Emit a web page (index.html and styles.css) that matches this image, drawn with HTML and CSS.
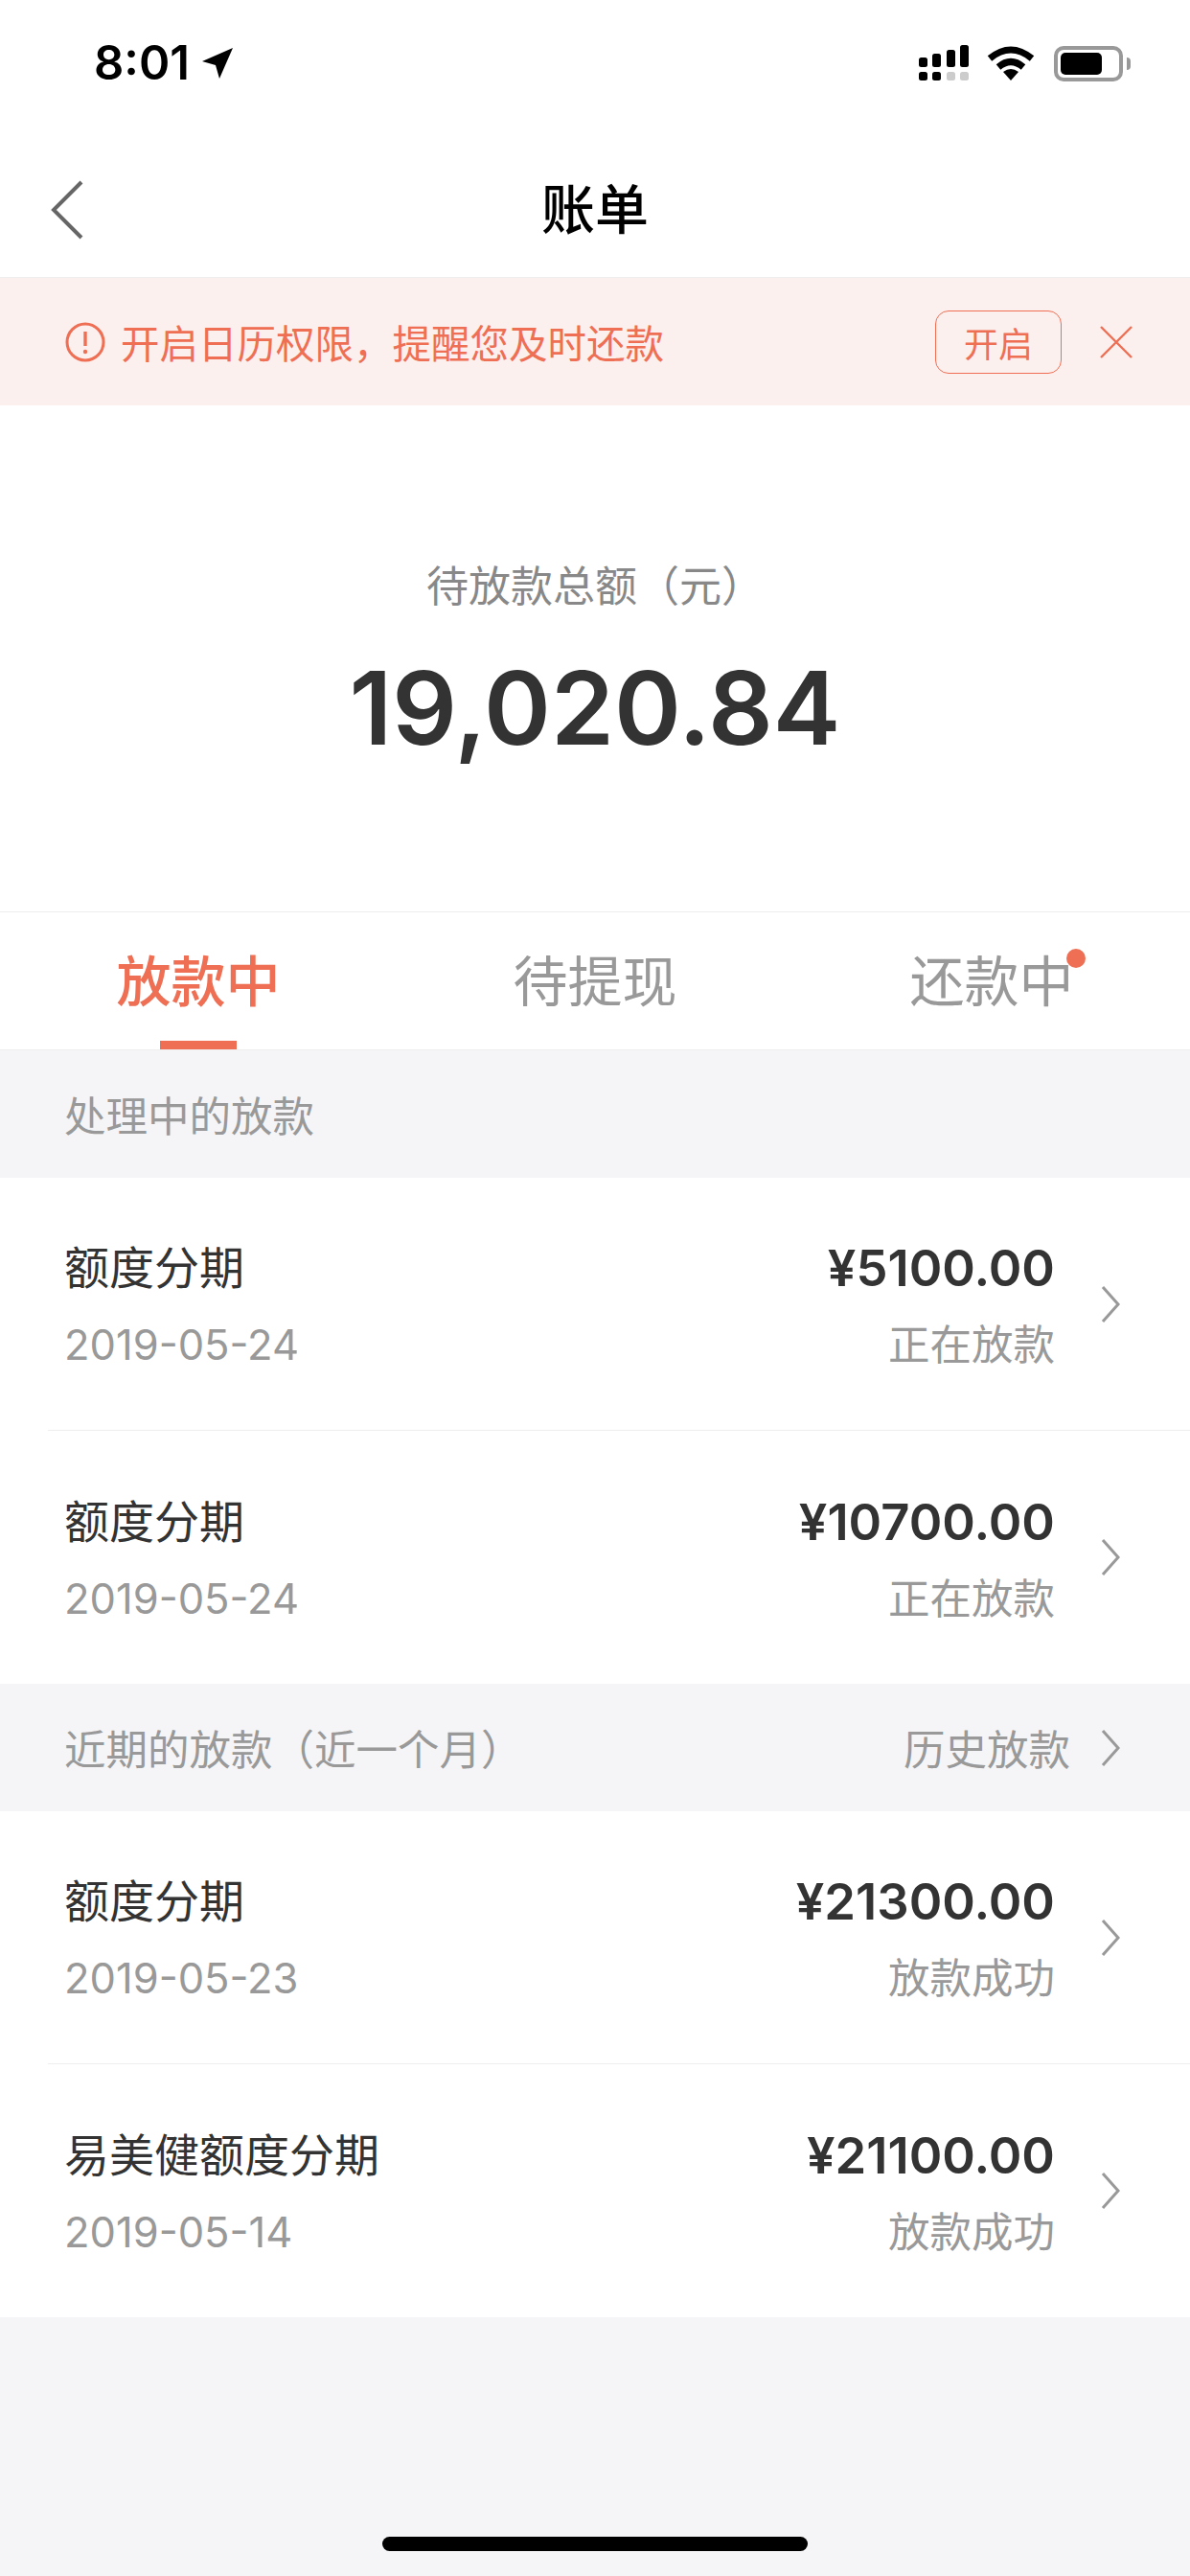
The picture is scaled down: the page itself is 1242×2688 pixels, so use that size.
FILE: index.html
```html
<!DOCTYPE html>
<html lang="zh-CN">

<head>
    <meta charset="UTF-8">
    <meta name="viewport" content="width=device-width, initial-scale=1.0">
    <title>账单</title>
    <link rel="stylesheet" href="styles.css">
</head>

<body>
    <div class="statusbar">
        <div class="status-time">
            <span>8:01</span>
            <svg class="status-arrow" width="34" height="34" viewBox="0 0 34 34">
                <path d="M33 1 L1 15 L15 19 L19 33 Z" fill="#000" />
            </svg>
        </div>
        <div class="status-icons">
            <svg width="52" height="38" viewBox="0 -1 52 38">
                <rect x="0" y="12" width="9" height="10" rx="2.5" />
                <rect x="14" y="8" width="9" height="14" rx="2.5" />
                <rect x="29" y="4" width="9" height="18" rx="2.5" />
                <rect x="43" y="-1" width="9" height="23" rx="2.5" />
                <rect x="0" y="27" width="9" height="9" rx="2.5" />
                <rect x="14" y="27" width="9" height="9" rx="2.5" />
                <rect x="29" y="27" width="9" height="9" rx="2.5" fill="#ccc" />
                <rect x="43" y="27" width="9" height="9" rx="2.5" fill="#ccc" />
            </svg>
            <svg width="50" height="36" viewBox="0 0 50 36">
                <path d="M3 13 Q25 -5 47 13" fill="none" stroke="#000" stroke-width="7" />
                <path d="M12 22 Q25 11 38 22" fill="none" stroke="#000" stroke-width="7" />
                <path d="M17 27 Q25 21 33 27 L25 36 Z" />
            </svg>
            <div class="battery">
                <div class="battery-level"></div>
            </div>
            <div class="battery-cap"></div>
        </div>
    </div>

    <div class="navbar">
        <svg class="nav-back" width="36" height="62" viewBox="0 0 36 62">
            <path d="M33 2 L4 31 L33 60" fill="none" stroke="#666" stroke-width="4" />
        </svg>
        <h1>账单</h1>
    </div>

    <div class="notice">
        <svg width="42" height="42" viewBox="0 0 42 42">
            <circle cx="21" cy="21" r="19" fill="none" stroke="#ee6f54" stroke-width="3" />
            <path d="M21 10 V25" stroke="#ee6f54" stroke-width="3.4" />
            <circle cx="21" cy="31" r="2.2" fill="#ee6f54" />
        </svg>
        <span class="notice-text">开启日历权限&#xFF0C;提醒您及时还款</span>
        <button class="notice-btn">开启</button>
        <svg class="notice-close" width="34" height="34" viewBox="0 0 34 34">
            <path d="M1 1 L33 33 M33 1 L1 33" stroke="#ee6f54" stroke-width="2.4" />
        </svg>
    </div>

    <div class="summary">
        <div class="summary-label">待放款总额&#xFF08;元&#xFF09;</div>
        <div class="summary-value">19,020.84</div>
    </div>

    <div class="tabs">
        <div class="tab active"><span class="tab-label">放款中</span></div>
        <div class="tab"><span class="tab-label">待提现</span></div>
        <div class="tab"><span class="tab-label">还款中<i class="tab-dot"></i></span></div>
    </div>

    <div class="section-head">
        <span>处理中的放款</span>
    </div>
    <div class="list">
        <div class="row">
            <div class="row-left">
                <div class="row-title">额度分期</div>
                <div class="row-date">2019-05-24</div>
            </div>
            <div class="row-right">
                <div class="row-amount">¥5100.00</div>
                <div class="row-status">正在放款</div>
            </div>
            <svg class="chevron" width="20" height="38" viewBox="0 0 20 38">
                <path d="M2 1 L18 19 L2 37" />
            </svg>
        </div>
        <div class="row">
            <div class="row-left">
                <div class="row-title">额度分期</div>
                <div class="row-date">2019-05-24</div>
            </div>
            <div class="row-right">
                <div class="row-amount">¥10700.00</div>
                <div class="row-status">正在放款</div>
            </div>
            <svg class="chevron" width="20" height="38" viewBox="0 0 20 38">
                <path d="M2 1 L18 19 L2 37" />
            </svg>
        </div>
    </div>

    <div class="section-head">
        <span>近期的放款&#xFF08;近一个月&#xFF09;</span>
        <span class="section-link">历史放款
            <svg class="chevron" width="20" height="38" viewBox="0 0 20 38">
                <path d="M2 1 L18 19 L2 37" />
            </svg>
        </span>
    </div>
    <div class="list">
        <div class="row">
            <div class="row-left">
                <div class="row-title">额度分期</div>
                <div class="row-date">2019-05-23</div>
            </div>
            <div class="row-right">
                <div class="row-amount">¥21300.00</div>
                <div class="row-status">放款成功</div>
            </div>
            <svg class="chevron" width="20" height="38" viewBox="0 0 20 38">
                <path d="M2 1 L18 19 L2 37" />
            </svg>
        </div>
        <div class="row">
            <div class="row-left">
                <div class="row-title">易美健额度分期</div>
                <div class="row-date">2019-05-14</div>
            </div>
            <div class="row-right">
                <div class="row-amount">¥21100.00</div>
                <div class="row-status">放款成功</div>
            </div>
            <svg class="chevron" width="20" height="38" viewBox="0 0 20 38">
                <path d="M2 1 L18 19 L2 37" />
            </svg>
        </div>
    </div>

    <div class="home-bar"></div>
</body>

</html>
```

FILE: styles.css
```css
body {
    margin: 0;
    width: 1242px;
    height: 2688px;
    position: relative;
    overflow: hidden;
    background-color: #f5f5f7;
    font-family: Inter, "Noto Sans CJK SC", sans-serif;
    color: #333;
}

.statusbar {
    height: 132px;
    padding: 44px 62px 0 98px;
    box-sizing: border-box;
    background-color: white;
    display: flex;
    justify-content: space-between;
    align-items: flex-start;
}

.status-time {
    display: flex;
    align-items: center;
    gap: 12px;
    font-size: 49px;
    font-weight: 600;
    line-height: 44px;
    color: #000;
}

.status-icons {
    display: flex;
    align-items: center;
    padding-top: 3px;
}

.status-icons svg:first-child {
    margin-right: 19px;
}

.status-icons svg:nth-child(2) {
    margin-right: 20px;
}

.battery {
    width: 72px;
    height: 37px;
    box-sizing: border-box;
    border: 4px solid #999;
    border-radius: 10px;
    padding: 3px;
}

.battery-level {
    width: 43px;
    height: 100%;
    background-color: #000;
    border-radius: 5px;
}

.battery-cap {
    width: 4px;
    height: 13px;
    margin-left: 4px;
    background-color: #999;
    border-radius: 0 4px 4px 0;
}

.navbar {
    height: 149px;
    padding-top: 8px;
    background-color: white;
    display: flex;
    align-items: center;
    justify-content: center;
    position: relative;
    border-bottom: 1px solid #eee;
}

.navbar h1 {
    margin: 0;
    font-size: 56px;
    font-weight: 500;
    color: #000;
}

.nav-back {
    position: absolute;
    left: 52px;
    top: 56px;
}

.notice {
    height: 133px;
    padding: 0 60px 0 68px;
    display: flex;
    align-items: center;
    background-color: #fcf0ef;
    color: #ee6f54;
}

.notice-text {
    margin-left: 16px;
    font-size: 40.5px;
    flex: 1;
}

.notice-btn {
    width: 132px;
    height: 66px;
    padding: 0;
    border: 1.5px solid #ee6f54;
    border-radius: 14px;
    background: none;
    color: #ee6f54;
    font-family: inherit;
    font-size: 36px;
}

.notice-close {
    margin-left: 40px;
}

.summary {
    height: 529px;
    background-color: white;
    text-align: center;
    box-sizing: border-box;
    padding-top: 158px;
    border-bottom: 1px solid #eee;
}

.summary-label {
    font-size: 44px;
    line-height: 62px;
    color: #888;
}

.summary-value {
    margin-top: 31px;
    font-size: 106px;
    font-weight: 600;
    line-height: 130px;
}

.tabs {
    height: 144px;
    background-color: white;
    display: grid;
    grid-template-columns: repeat(3, 1fr);
    border-bottom: 1px solid #eee;
    box-sizing: border-box;
}

.tab {
    position: relative;
    display: flex;
    justify-content: center;
    padding-top: 33px;
    font-size: 57px;
    line-height: 80px;
    color: #999;
}

.tab.active {
    color: #ee6f54;
    font-weight: 500;
}

.tab.active::after {
    content: "";
    position: absolute;
    left: 167px;
    bottom: 0;
    width: 80px;
    height: 9px;
    background-color: #ee6f54;
}

.tab-label {
    position: relative;
}

.tab-dot {
    position: absolute;
    right: -12px;
    top: 5px;
    width: 20px;
    height: 20px;
    border-radius: 50%;
    background-color: #ee6f54;
}

.section-head {
    height: 133px;
    padding: 0 73px 0 67px;
    display: flex;
    justify-content: space-between;
    align-items: center;
    font-size: 43.5px;
    color: #999;
}

.section-link {
    display: flex;
    align-items: center;
    gap: 32px;
}

.list {
    background-color: white;
}

.row {
    height: 264px;
    margin-left: 50px;
    padding: 0 73px 0 17px;
    display: flex;
    align-items: center;
    border-bottom: 1px solid #eee;
    box-sizing: border-box;
}

.row:last-child {
    border-bottom: none;
}

.row-left {
    flex: 1;
    padding-top: 5px;
}

.row-right {
    text-align: right;
    margin-right: 48px;
    padding-top: 5px;
}

.row-title {
    font-size: 47px;
    line-height: 66px;
}

.row-date {
    margin-top: 14px;
    font-size: 43.5px;
    line-height: 66px;
    color: #999;
}

.row-amount {
    font-size: 52.5px;
    font-weight: 600;
    line-height: 66px;
}

.row-status {
    margin-top: 14px;
    font-size: 43.5px;
    line-height: 66px;
    color: #999;
}

.chevron {
    fill: none;
    stroke: #999;
    stroke-width: 3;
}

.home-bar {
    position: absolute;
    left: 399px;
    top: 2647px;
    width: 444px;
    height: 15px;
    border-radius: 8px;
    background-color: #000;
}
```
